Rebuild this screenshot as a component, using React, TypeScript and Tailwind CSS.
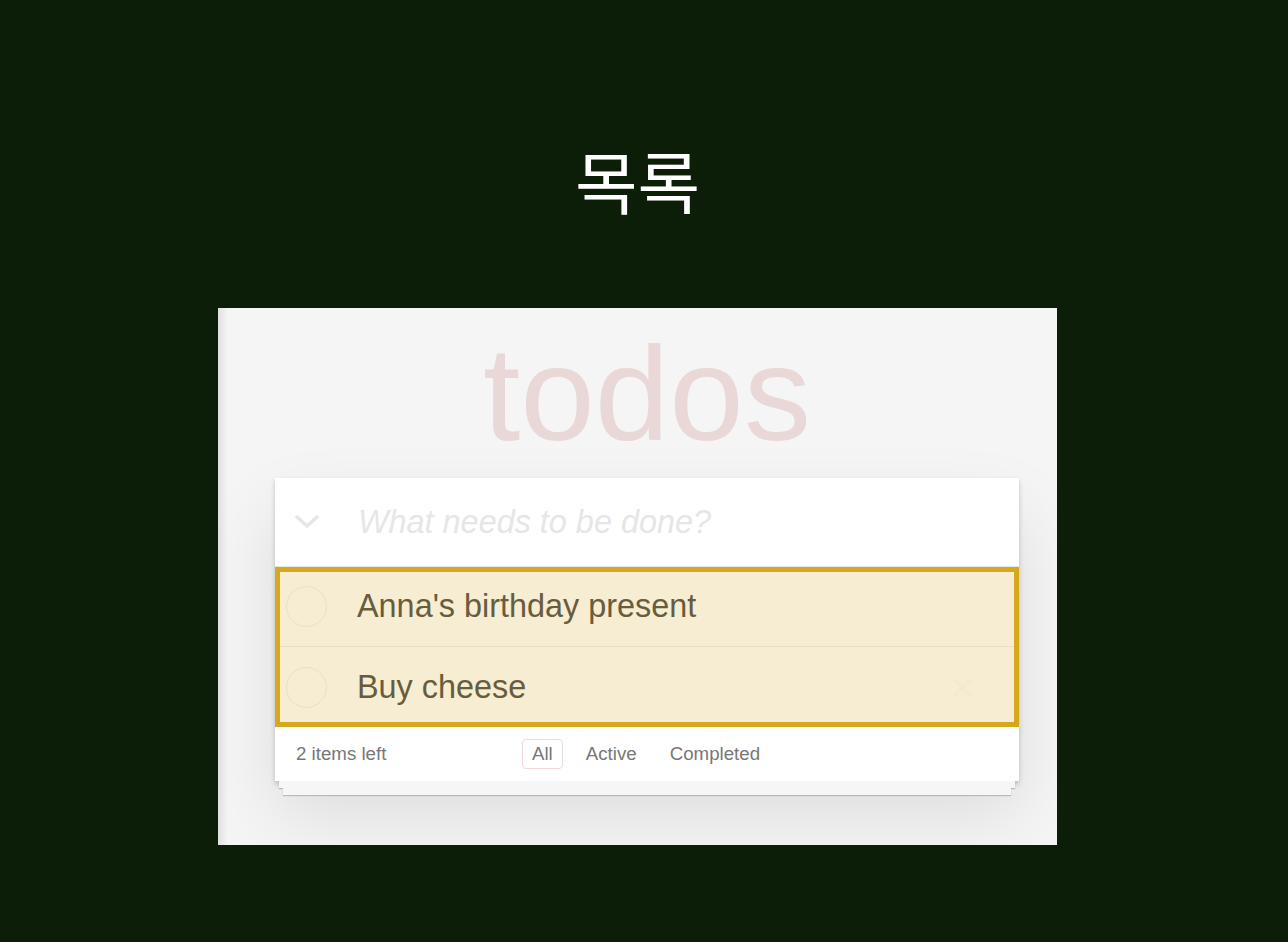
const sans = "font-['Liberation_Sans',Arial,sans-serif]";

const todos = ["Anna's birthday present", 'Buy cheese'];

function TodoRow({ title, last }: { title: string; last: boolean }) {
  return (
    <div className={`flex h-[80px] items-center ${last ? '' : 'border-b border-[#ebe0c4]'}`}>
      <div className="ml-[11px] h-[41px] w-[41px] rounded-full border border-[#ebe0c4]" />
      <span className="ml-[30px] text-[32.4px] text-[#685c3d]">{title}</span>
      {last && <span className="ml-auto mr-[45px] text-[40px] leading-none text-[#f3eacf]">×</span>}
    </div>
  );
}

export default function App() {
  return (
    <div className="min-h-[942px] w-full bg-[#0c1e07]">
      <div className="flex w-[1275px] flex-col items-center">
        {/* page title */}
        <h2 className="mt-[146px] h-[68px] font-['Noto_Sans_CJK_KR',sans-serif] text-[68px] leading-none text-white">
          목록
        </h2>

        {/* screenshot panel */}
        <div className={`mt-[94px] flex h-[537px] w-[839px] overflow-hidden bg-[#f5f5f5] ${sans}`}>
          <div className="w-[10px] shrink-0 bg-linear-to-r from-[#e0e0e0] to-[#f5f5f5]" />
          <div className="flex flex-col pl-[47px]">
            <h1 className="mt-[19px] w-[744px] text-center text-[134px] leading-none text-[#ead7d7]">todos</h1>

            <div className="mt-[17px] w-[744px] bg-white shadow-[0_3px_5px_rgba(0,0,0,0.2),0_34px_68px_rgba(0,0,0,0.1)]">
              {/* new todo input */}
              <div className="flex h-[89px] items-center border-b border-[#e6e6e6]">
                <svg className="ml-[20px]" width="24" height="16" viewBox="0 0 24 16" fill="none">
                  <polyline points="2,3 12,12 22,3" stroke="#e6e6e6" strokeWidth="3.5" strokeLinecap="round" strokeLinejoin="round" />
                </svg>
                <span className="ml-[39px] text-[32.4px] italic text-[#e6e6e6]">What needs to be done?</span>
              </div>

              {/* highlighted list */}
              <div className="relative bg-[#f6edd2]">
                {todos.map((t, i) => (
                  <TodoRow key={t} title={t} last={i === todos.length - 1} />
                ))}
                <div className="pointer-events-none absolute inset-0 border-[5px] border-[#d6a81e]" />
              </div>

              {/* footer */}
              <div className="flex h-[54px] items-center pl-[21px] text-[18.7px] text-[#777]">
                <span className="w-[226px]">2 items left</span>
                <div className="flex gap-[13px]">
                  <span className="rounded-[4px] border border-[#efd9d9] px-[9px] py-[3px] leading-[22px]">All</span>
                  <span className="rounded-[4px] border border-transparent px-[9px] py-[3px] leading-[22px]">Active</span>
                  <span className="rounded-[4px] border border-transparent px-[9px] py-[3px] leading-[22px]">Completed</span>
                </div>
              </div>
            </div>
            <div className="mx-[4px] h-[7px] bg-[#f6f6f6] shadow-[0_1px_1px_rgba(0,0,0,0.2)]" />
            <div className="mx-[8px] h-[7px] bg-[#f6f6f6] shadow-[0_1px_1px_rgba(0,0,0,0.2)]" />
          </div>
        </div>
      </div>
    </div>
  );
}
